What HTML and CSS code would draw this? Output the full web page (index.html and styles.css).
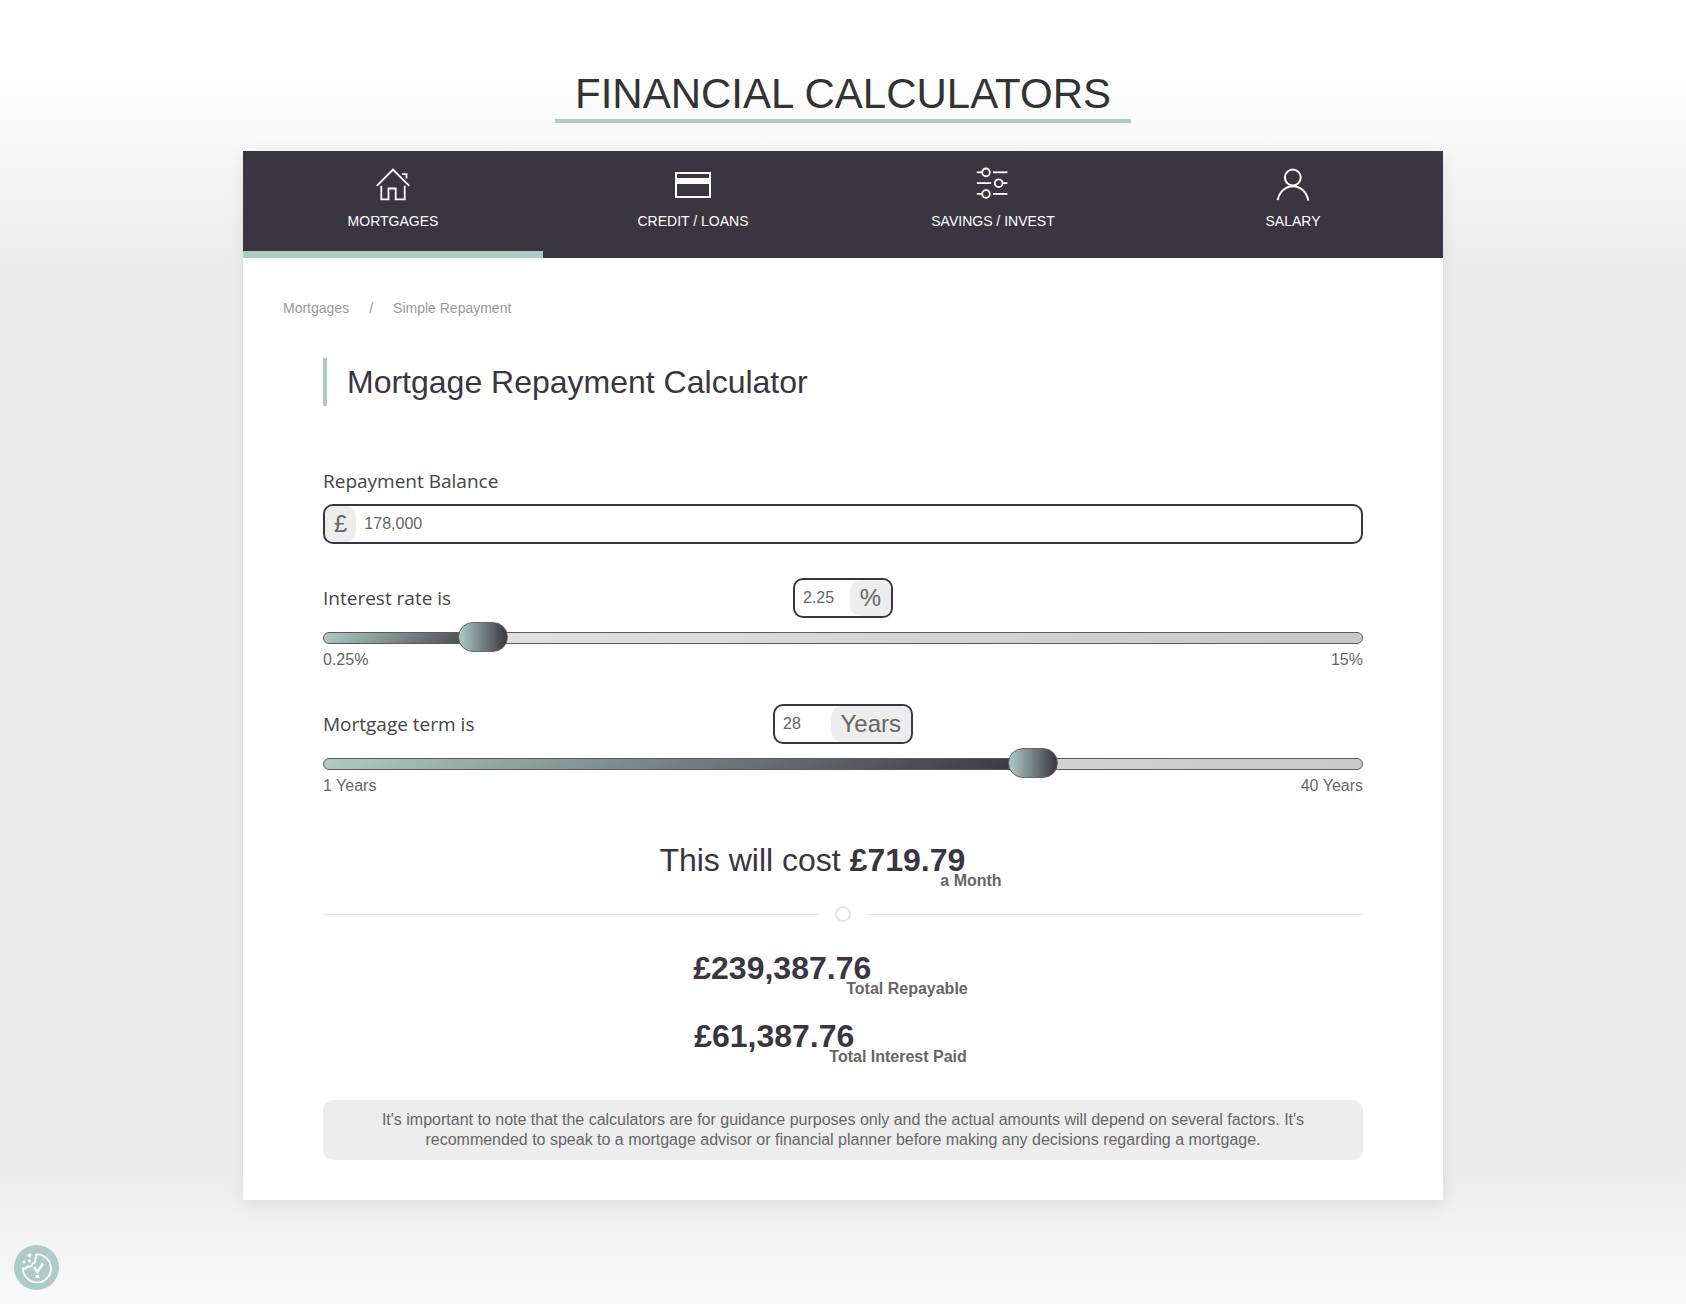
FILE: index.html
```html
<!DOCTYPE html>
<html lang="en">
<head>
<meta charset="utf-8">
<meta name="viewport" content="width=device-width, initial-scale=1">
<title>Financial Calculators</title>
<link rel="stylesheet" href="styles.css">
</head>
<body>
<main class="page">
  <h1 class="page-title">FINANCIAL CALCULATORS</h1>

  <div class="card">
    <nav class="tabs">
      <a class="tab tab-active" href="#mortgages">
        <span class="tab-icon"><svg width="36" height="36" viewBox="0 0 20 20" fill="currentColor">
          <polygon points="18.65 11.35 10 2.71 1.35 11.35 0.65 10.65 10 1.29 19.35 10.65"/>
          <polygon points="15 4 18 4 18 7 17 7 17 5 15 5"/>
          <polygon points="3 11 4 11 4 18 7 18 7 12 12 12 12 18 16 18 16 11 17 11 17 19 11 19 11 13 8 13 8 19 3 19"/>
        </svg></span>
        <span>MORTGAGES</span>
      </a>
      <a class="tab" href="#credit">
        <span class="tab-icon"><svg width="40" height="40" viewBox="0 0 20 20" fill="currentColor">
          <rect x="1.5" y="4.5" width="17" height="12" fill="none" stroke="currentColor"/>
          <rect x="1" y="7" width="18" height="3"/>
        </svg></span>
        <span>CREDIT / LOANS</span>
      </a>
      <a class="tab" href="#savings">
        <span class="tab-icon"><svg width="36" height="36" viewBox="0 0 20 20" fill="currentColor">
          <g fill="none" stroke="currentColor">
            <ellipse cx="6.11" cy="3.55" rx="2.11" ry="2.15"/>
            <ellipse cx="6.11" cy="15.55" rx="2.11" ry="2.15"/>
            <circle cx="13.15" cy="9.55" r="2.15"/>
          </g>
          <rect x="1" y="3" width="3" height="1"/>
          <rect x="10" y="3" width="8" height="1"/>
          <rect x="1" y="9" width="8" height="1"/>
          <rect x="15" y="9" width="3" height="1"/>
          <rect x="1" y="15" width="3" height="1"/>
          <rect x="10" y="15" width="8" height="1"/>
        </svg></span>
        <span>SAVINGS / INVEST</span>
      </a>
      <a class="tab" href="#salary">
        <span class="tab-icon"><svg width="36" height="36" viewBox="0 0 20 20" fill="none" stroke="currentColor" stroke-width="1.1">
          <circle cx="9.9" cy="6.4" r="4.4"/>
          <path d="M1.5,19 C2.3,14.5 5.8,11.2 10,11.2 C14.2,11.2 17.7,14.6 18.5,19.2"/>
        </svg></span>
        <span>SALARY</span>
      </a>
    </nav>

    <div class="breadcrumb">
      <a href="#mortgages">Mortgages</a><span>/</span><span>Simple Repayment</span>
    </div>

    <form class="calculator">
      <h2 class="calculator-title">Mortgage Repayment Calculator</h2>

      <div class="field">
        <label class="label" for="balance">Repayment Balance</label>
        <div class="box">
          <span class="unit">£</span>
          <input class="value" id="balance" type="text" value="178,000">
        </div>
      </div>

      <div class="field">
        <div class="field-head">
          <label class="label" for="rate">Interest rate is</label>
          <div class="box box-rate">
            <input class="value" id="rate" type="text" value="2.25">
            <span class="unit">%</span>
          </div>
        </div>
        <input class="slider" type="range" aria-label="Interest rate" min="0.25" max="15" step="0.25" value="2.25" style="--fill: 16%">
        <div class="limits"><span>0.25%</span><span>15%</span></div>
      </div>

      <div class="field">
        <div class="field-head">
          <label class="label" for="term">Mortgage term is</label>
          <div class="box box-term">
            <input class="value" id="term" type="text" value="28">
            <span class="unit">Years</span>
          </div>
        </div>
        <input class="slider" type="range" aria-label="Mortgage term" min="1" max="40" value="28" style="--fill: 68%">
        <div class="limits"><span>1 Years</span><span>40 Years</span></div>
      </div>

      <div class="results">
        <p class="result">This will cost <strong>£719.79</strong><span class="result-note">a Month</span></p>
        <div class="divider"><span class="divider-ring"></span></div>
        <p class="result"><strong>£239,387.76</strong><span class="result-note">Total Repayable</span></p>
        <p class="result"><strong>£61,387.76</strong><span class="result-note">Total Interest Paid</span></p>
      </div>

      <p class="notice">It's important to note that the calculators are for guidance purposes only and the actual amounts will depend on several factors. It's recommended to speak to a mortgage advisor or financial planner before making any decisions regarding a mortgage.</p>
    </form>
  </div>
</main>

<button class="cookie" type="button" aria-label="Cookie settings">
  <svg width="45" height="45" viewBox="0 0 45 45" fill="none" stroke="#fff">
    <path d="M22 9.500 A14 14 0 1 1 9 23 C11 24 13 23.500 13.500 21.500 C16 22 18.500 21 18.500 18.500 C21 18 22 16 21 14 C22.500 13 22.500 11 22 9.500 Z" stroke-width="1.800" stroke-linejoin="round"/>
    <g fill="#fff" stroke="none">
      <circle cx="15.500" cy="10.500" r="1.900"/>
      <circle cx="10" cy="17" r="1.400"/>
      <circle cx="15.500" cy="16" r="1.400"/>
      <rect x="21.500" y="30" width="3.500" height="3"/>
    </g>
    <path d="M20 22 L23.500 27 L29 18.500" stroke-width="2.500"/>
  </svg>
</button>
</body>
</html>
```
FILE: styles.css
```css
* {
  box-sizing: border-box;
}

body {
  margin: 0;
  min-height: 100vh;
  background: linear-gradient(180deg, #fff 0, #fff 5%, #ececec 20%, #ececec 90%, #fafafa 100%);
  color: #666;
  font: 16px/20px "Liberation Sans", Arial, sans-serif;
}

.page {
  display: flex;
  flex-direction: column;
  align-items: center;
  padding: 68px 20px 104px;
}

.page-title {
  margin: 0 0 28px;
  padding: 0 20px;
  border-bottom: 4px solid #adccc6;
  color: #333;
  font-size: 42px;
  font-weight: 400;
  line-height: 51px;
}

.card {
  width: 100%;
  max-width: 1200px;
  background: #fff;
  box-shadow: 0 5px 15px rgba(0, 0, 0, 0.08);
}

.tabs {
  display: grid;
  grid-template-columns: repeat(4, 1fr);
  background: #393541;
}

.tab {
  display: flex;
  flex-direction: column;
  align-items: center;
  gap: 7px;
  padding: 13px 10px 20px;
  border-bottom: 7px solid transparent;
  color: #fff;
  font-size: 14px;
  text-decoration: none;
}

.tab-active {
  border-bottom-color: #adccc6;
}

.tab-icon {
  display: flex;
  align-items: center;
  height: 40px;
}

.breadcrumb {
  display: flex;
  gap: 20px;
  padding: 40px 40px 0;
  color: #999;
  font-size: 14px;
}

.breadcrumb a {
  color: inherit;
  text-decoration: none;
}

.calculator {
  padding: 40px 80px;
}

.calculator-title {
  margin: 0 0 60px;
  padding-left: 20px;
  border-left: 4px solid #adccc6;
  color: #393541;
  font-size: 32px;
  font-weight: 400;
  line-height: 48px;
}

.field + .field {
  margin-top: 34px;
}

.label {
  display: block;
  color: #444;
  font: 19px/30px "Open Sans", "Noto Sans", sans-serif;
}

.field > .label {
  margin-bottom: 8px;
}

.box {
  display: flex;
  height: 40px;
  overflow: hidden;
  border: 2px solid #393541;
  border-radius: 10px;
  background: #fff;
}

.box-rate {
  width: 100px;
}

.box-term {
  width: 140px;
}

.unit {
  padding: 0 10px;
  border-radius: 10px;
  background: #ededed;
  font-size: 24px;
  line-height: 36px;
}

.unit:first-child {
  padding: 0 9px;
}

.value {
  flex: 1;
  min-width: 0;
  padding: 0 8px;
  border: 0;
  outline: 0;
  background: none;
  color: #666;
  font: inherit;
}

.field-head {
  display: grid;
  grid-template-columns: 1fr auto 1fr;
  align-items: center;
  margin-bottom: 5px;
}

.field-head .label {
  line-height: 32px;
}

.slider {
  display: block;
  width: 100%;
  height: 30px;
  margin: 0 0 -3px;
  background: none;
  -webkit-appearance: none;
  appearance: none;
}

.slider::-webkit-slider-runnable-track {
  height: 12px;
  border: 1px solid #5c5a5f;
  border-radius: 6px;
  background:
    linear-gradient(135deg, #adccc6, #393541) 0 0 / var(--fill) 100% no-repeat,
    linear-gradient(135deg, #e5e5e5, #c8c8c8);
}

.slider::-webkit-slider-thumb {
  width: 50px;
  height: 30px;
  margin-top: -11px;
  border: 1px solid #666;
  border-radius: 15px;
  background: linear-gradient(90deg, #adccc6, #393541);
  -webkit-appearance: none;
  appearance: none;
}

.limits {
  display: flex;
  justify-content: space-between;
}

.results {
  margin: 40px 0 33px;
}

.result {
  margin: 0;
  color: #393541;
  font-size: 32px;
  line-height: 48px;
  text-align: center;
}

.result + .result {
  margin-top: 13px;
}

/* The caption hangs below and tucks under the end of the amount. */
.result-note {
  display: inline-block;
  height: 20px;
  margin: 0 25px 0 -25px;
  color: #666;
  font-size: 16px;
  font-weight: 700;
  line-height: 20px;
  vertical-align: -15px;
}

.divider {
  display: flex;
  align-items: center;
  gap: 17px;
  margin: 15px 0 22px;
}

.divider::before,
.divider::after {
  content: "";
  flex: 1;
  border-top: 1px solid #e5e5e5;
}

.divider-ring {
  width: 16px;
  height: 16px;
  border: 2px solid #e5e5e5;
  border-radius: 50%;
}

.notice {
  margin: 0;
  padding: 10px;
  border-radius: 10px;
  background: #ededed;
  text-align: center;
}

.cookie {
  position: fixed;
  bottom: 14px;
  left: 14px;
  width: 45px;
  height: 45px;
  padding: 0;
  border: 0;
  border-radius: 50%;
  background: #adccc6;
}

.cookie svg {
  display: block;
}
```
